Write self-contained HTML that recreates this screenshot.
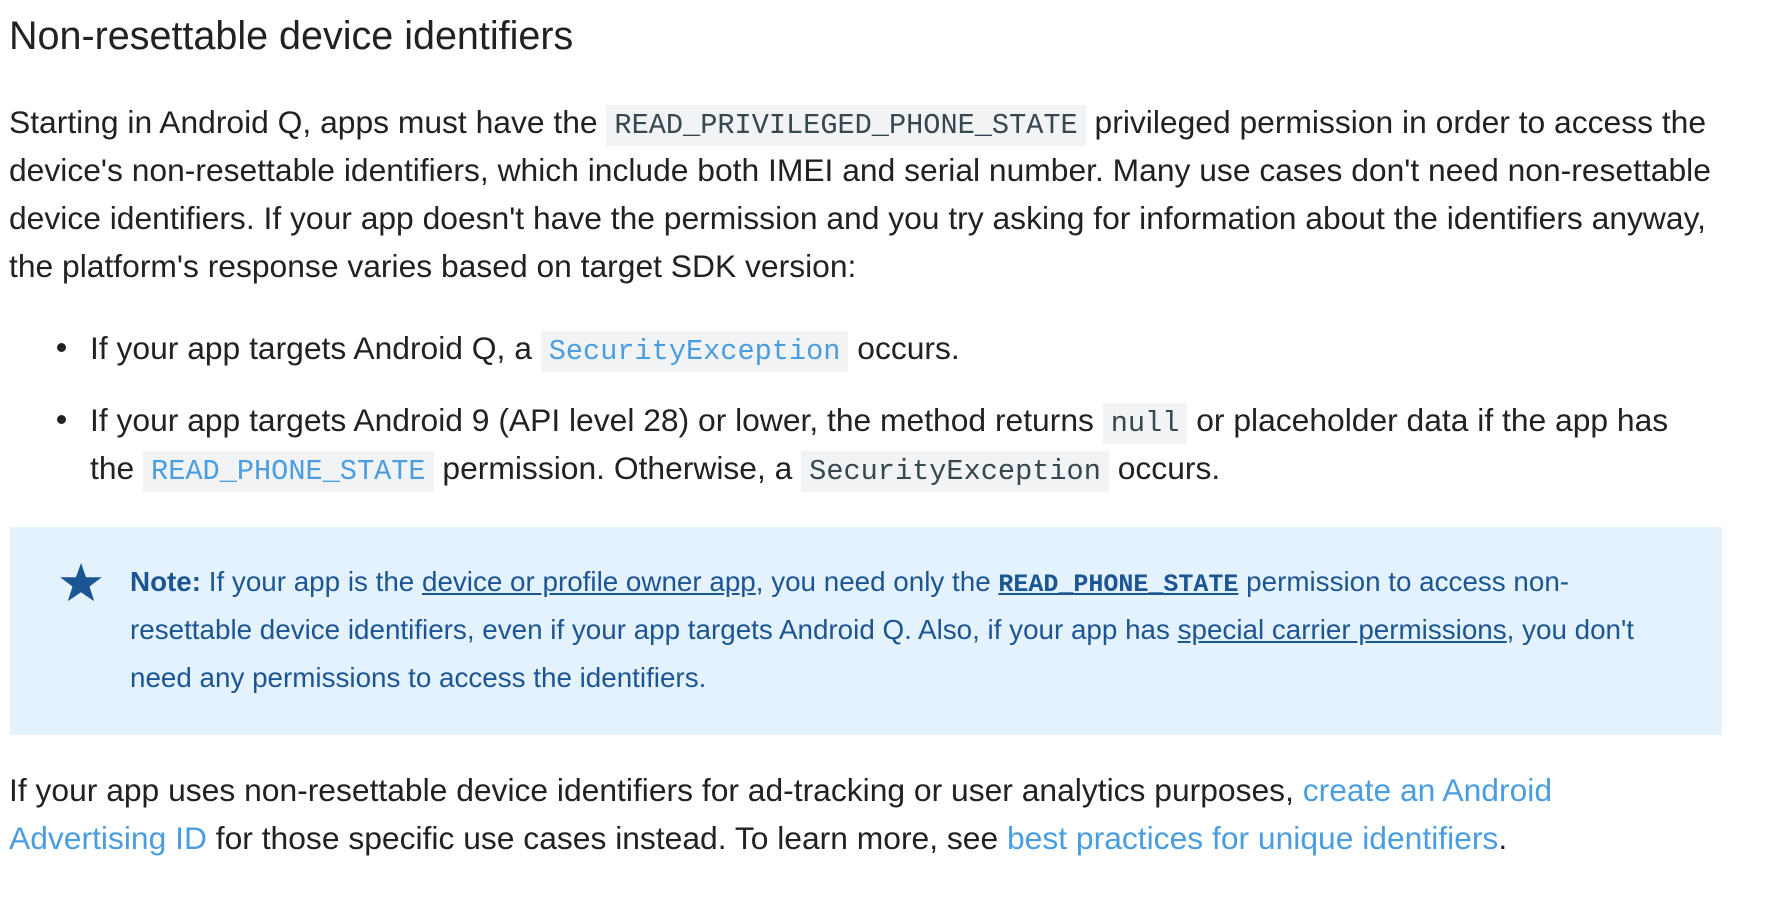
<!DOCTYPE html>
<html><head><meta charset="utf-8"><style>
*{margin:0;padding:0;box-sizing:border-box}
html,body{width:1782px;height:922px;background:#fff;overflow:hidden}
body{font-family:"Liberation Sans",sans-serif;color:#202124;position:relative}
.l{position:absolute;white-space:nowrap;font-size:31.8px;line-height:48px}
h2{position:absolute;left:9px;top:13px;font-weight:400;font-size:39.5px;line-height:46px;white-space:nowrap;color:#202124}
code{font-family:"Liberation Mono",monospace;font-size:28.6px;background:#f1f3f4;color:#37474f;padding:4px 8px;}
code.a{color:#4a9de0}
a{color:#4a9de0;text-decoration:none}
.dot{position:absolute;width:9px;height:9px;border-radius:50%;background:#202124;left:57px}
.note{position:absolute;left:10px;top:527px;width:1712px;height:208px;background:#e3f2fd}
.n{position:absolute;white-space:nowrap;font-size:27.8px;line-height:48px;color:#1c5594;left:130px}
.n u{text-decoration:underline}
.n code{background:none;color:#1c5594;font-weight:bold;padding:0;font-size:25px;text-decoration:underline}
</style></head><body>
<h2>Non-resettable device identifiers</h2>
<div class="l" style="left:9px;top:98px">Starting in Android Q, apps must have the <code>READ_PRIVILEGED_PHONE_STATE</code> privileged permission in order to access the</div>
<div class="l" style="left:9px;top:146px">device's non-resettable identifiers, which include both IMEI and serial number. Many use cases don't need non-resettable</div>
<div class="l" style="left:9px;top:194px">device identifiers. If your app doesn't have the permission and you try asking for information about the identifiers anyway,</div>
<div class="l" style="left:9px;top:242px">the platform's response varies based on target SDK version:</div>
<div class="dot" style="top:343px"></div>
<div class="l" style="left:90px;top:324px">If your app targets Android Q, a <code class="a">SecurityException</code> occurs.</div>
<div class="dot" style="top:415px"></div>
<div class="l" style="left:90px;top:396px">If your app targets Android 9 (API level 28) or lower, the method returns <code>null</code> or placeholder data if the app has</div>
<div class="l" style="left:90px;top:444px">the <code class="a">READ_PHONE_STATE</code> permission. Otherwise, a <code>SecurityException</code> occurs.</div>
<div class="note"></div>
<svg style="position:absolute;left:60px;top:563px" width="42" height="40" viewBox="0 0 24 23"><path fill="#1c5594" d="M12 0l2.9 8.2H24l-7.1 5.3 2.7 8.5L12 16.8 4.4 22l2.7-8.5L0 8.2h9.1z"/></svg>
<div class="n" style="top:558px"><b>Note:</b> If your app is the <u>device or profile owner app</u>, you need only the <code>READ_PHONE_STATE</code> permission to access non-</div>
<div class="n" style="top:606px">resettable device identifiers, even if your app targets Android Q. Also, if your app has <u>special carrier permissions</u>, you don't</div>
<div class="n" style="top:654px">need any permissions to access the identifiers.</div>
<div class="l" style="left:9px;top:766px">If your app uses non-resettable device identifiers for ad-tracking or user analytics purposes, <a>create an Android</a></div>
<div class="l" style="left:9px;top:814px"><a>Advertising ID</a> for those specific use cases instead. To learn more, see <a>best practices for unique identifiers</a>.</div>
</body></html>
